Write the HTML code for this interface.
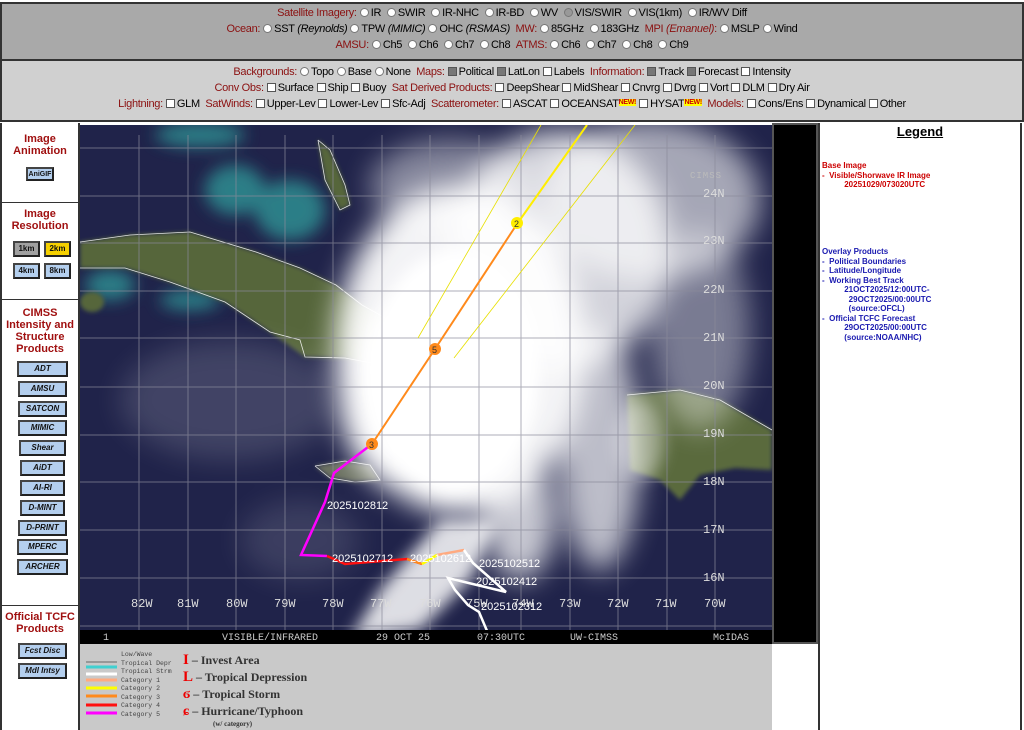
<!DOCTYPE html>
<html><head><meta charset="utf-8"><style>
*{margin:0;padding:0;box-sizing:border-box}
body{width:1024px;height:730px;overflow:hidden;background:#fff;font-family:"Liberation Sans",Arial,sans-serif;position:relative}
.p{position:absolute;left:0;width:1024px;text-align:center;font-size:11px;letter-spacing:-0.3px;color:#000}
.r{color:#8b1010}
.rb{display:inline-block;width:9px;height:9px;border-radius:50%;background:#fff;border:1px solid #777;vertical-align:-1px;margin:0 2px 0 3px}
.cb{display:inline-block;width:9px;height:9px;background:#fff;border:1px solid #555;vertical-align:-1px;margin:0 2px 0 3px}
.ck{background:#777}
.new{background:#ff0;color:#c00;font-size:7px;font-weight:bold;vertical-align:3px}
.sb{position:absolute;left:0;width:80px;text-align:center}
.h{color:#a01010;font-weight:bold;font-size:11px;line-height:12px}
.bt{position:absolute;background:#b4cfee;border:2px solid #444;border-right-color:#222;border-bottom-color:#222;font-size:8px;font-weight:bold;font-style:italic;text-align:center;line-height:11px;color:#111}
.lg{position:absolute;left:822px;font-size:8px;font-weight:bold;line-height:9.5px}
</style></head><body>
<div style="position:absolute;left:0;top:2px;width:1024px;height:59px;background:#a9a9a9;border:2px solid #333"></div>
<div style="position:absolute;left:0;top:61px;width:1024px;height:61px;background:#d0d0d0;border:2px solid #333;border-top:none"></div>
<div class="p" style="top:7px"><span class="r">Satellite Imagery:</span><span class="rb"></span>IR <span class="rb"></span>SWIR <span class="rb"></span>IR-NHC <span class="rb"></span>IR-BD <span class="rb"></span>WV <span class="rb" style="background:#999"></span>VIS/SWIR <span class="rb"></span>VIS(1km) <span class="rb"></span>IR/WV Diff</div>
<div class="p" style="top:23px"><span class="r">Ocean:</span><span class="rb"></span>SST <i>(Reynolds)</i><span class="rb"></span>TPW <i>(MIMIC)</i><span class="rb"></span>OHC <i>(RSMAS)</i> &nbsp;<span class="r">MW:</span><span class="rb"></span>85GHz <span class="rb"></span>183GHz &nbsp;<span class="r">MPI <i>(Emanuel)</i>:</span><span class="rb"></span>MSLP<span class="rb"></span>Wind</div>
<div class="p" style="top:39px"><span class="r">AMSU:</span><span class="rb"></span>Ch5 <span class="rb"></span>Ch6 <span class="rb"></span>Ch7 <span class="rb"></span>Ch8 &nbsp;<span class="r">ATMS:</span><span class="rb"></span>Ch6 <span class="rb"></span>Ch7 <span class="rb"></span>Ch8 <span class="rb"></span>Ch9</div>
<div class="p" style="top:66px"><span class="r">Backgrounds:</span><span class="rb"></span>Topo<span class="rb"></span>Base<span class="rb"></span>None &nbsp;<span class="r">Maps:</span><span class="cb ck"></span>Political<span class="cb ck"></span>LatLon<span class="cb"></span>Labels &nbsp;<span class="r">Information:</span><span class="cb ck"></span>Track<span class="cb ck"></span>Forecast<span class="cb"></span>Intensity</div>
<div class="p" style="top:82px"><span class="r">Conv Obs:</span><span class="cb"></span>Surface<span class="cb"></span>Ship<span class="cb"></span>Buoy &nbsp;<span class="r">Sat Derived Products:</span><span class="cb"></span>DeepShear<span class="cb"></span>MidShear<span class="cb"></span>Cnvrg<span class="cb"></span>Dvrg<span class="cb"></span>Vort<span class="cb"></span>DLM<span class="cb"></span>Dry Air</div>
<div class="p" style="top:98px"><span class="r">Lightning:</span><span class="cb"></span>GLM &nbsp;<span class="r">SatWinds:</span><span class="cb"></span>Upper-Lev<span class="cb"></span>Lower-Lev<span class="cb"></span>Sfc-Adj &nbsp;<span class="r">Scatterometer:</span><span class="cb"></span>ASCAT<span class="cb"></span>OCEANSAT<span class="new">NEW!</span><span class="cb"></span>HYSAT<span class="new">NEW!</span> &nbsp;<span class="r">Models:</span><span class="cb"></span>Cons/Ens<span class="cb"></span>Dynamical<span class="cb"></span>Other</div>

<div style="position:absolute;left:0;top:123px;width:80px;height:607px;border-right:2px solid #333;border-left:2px solid #333"></div>
<div style="position:absolute;left:2px;top:202px;width:78px;border-top:1px solid #333"></div>
<div style="position:absolute;left:2px;top:299px;width:78px;border-top:1px solid #333"></div>
<div style="position:absolute;left:2px;top:605px;width:78px;border-top:1px solid #333"></div>
<div class="sb h" style="top:133px">Image<br>Animation</div>
<div class="bt" style="left:26px;top:167px;width:28px;height:14px;font-style:normal;font-size:7px">AniGIF</div>
<div class="sb h" style="top:208px">Image<br>Resolution</div>
<div class="bt" style="left:13px;top:241px;width:27px;height:16px;background:#a0a0a0;font-style:normal">1km</div>
<div class="bt" style="left:44px;top:241px;width:27px;height:16px;background:#f5d000;font-style:normal">2km</div>
<div class="bt" style="left:13px;top:263px;width:27px;height:16px;font-style:normal">4km</div>
<div class="bt" style="left:44px;top:263px;width:27px;height:16px;font-style:normal">8km</div>
<div class="sb h" style="top:307px">CIMSS<br>Intensity and<br>Structure<br>Products</div>
<div class="bt" style="left:17px;top:361px;width:51px;height:16px">ADT</div>
<div class="bt" style="left:18px;top:381px;width:49px;height:16px">AMSU</div>
<div class="bt" style="left:18px;top:401px;width:49px;height:16px">SATCON</div>
<div class="bt" style="left:18px;top:420px;width:49px;height:16px">MIMIC</div>
<div class="bt" style="left:19px;top:440px;width:47px;height:16px">Shear</div>
<div class="bt" style="left:20px;top:460px;width:45px;height:16px">AiDT</div>
<div class="bt" style="left:20px;top:480px;width:45px;height:16px">AI-RI</div>
<div class="bt" style="left:20px;top:500px;width:45px;height:16px">D-MINT</div>
<div class="bt" style="left:18px;top:520px;width:49px;height:16px">D-PRINT</div>
<div class="bt" style="left:17px;top:539px;width:51px;height:16px">MPERC</div>
<div class="bt" style="left:17px;top:559px;width:51px;height:16px">ARCHER</div>
<div class="sb h" style="top:611px">Official TCFC<br>Products</div>
<div class="bt" style="left:18px;top:643px;width:49px;height:16px">Fcst Disc</div>
<div class="bt" style="left:18px;top:663px;width:49px;height:16px">Mdl Intsy</div>

<div style="position:absolute;left:772px;top:123px;width:46px;height:521px;background:#000;border:2px solid #555"></div>
<div style="position:absolute;left:818px;top:123px;width:204px;height:607px;border-left:2px solid #333;border-right:2px solid #333"></div>
<div style="position:absolute;left:818px;top:124px;width:204px;text-align:center;font-size:13px;font-weight:bold;text-decoration:underline">Legend</div>
<div class="lg" style="top:161px;color:#c00">Base Image<br>-&nbsp; Visible/Shorwave IR Image<br>&nbsp;&nbsp;&nbsp;&nbsp;&nbsp;&nbsp;&nbsp;&nbsp;&nbsp;&nbsp;20251029/073020UTC</div>
<div class="lg" style="top:247px;color:#1a1ab0">Overlay Products<br>-&nbsp; Political Boundaries<br>-&nbsp; Latitude/Longitude<br>-&nbsp; Working Best Track<br>&nbsp;&nbsp;&nbsp;&nbsp;&nbsp;&nbsp;&nbsp;&nbsp;&nbsp;&nbsp;21OCT2025/12:00UTC-<br>&nbsp;&nbsp;&nbsp;&nbsp;&nbsp;&nbsp;&nbsp;&nbsp;&nbsp;&nbsp;&nbsp;&nbsp;29OCT2025/00:00UTC<br>&nbsp;&nbsp;&nbsp;&nbsp;&nbsp;&nbsp;&nbsp;&nbsp;&nbsp;&nbsp;&nbsp;&nbsp;(source:OFCL)<br>-&nbsp; Official TCFC Forecast<br>&nbsp;&nbsp;&nbsp;&nbsp;&nbsp;&nbsp;&nbsp;&nbsp;&nbsp;&nbsp;29OCT2025/00:00UTC<br>&nbsp;&nbsp;&nbsp;&nbsp;&nbsp;&nbsp;&nbsp;&nbsp;&nbsp;&nbsp;(source:NOAA/NHC)</div>

<svg style="position:absolute;left:80px;top:125px" width="692" height="605" viewBox="80 125 692 605">
<defs>
<filter id="b8" x="-50%" y="-50%" width="200%" height="200%"><feGaussianBlur stdDeviation="8"/></filter>
<filter id="b14" x="-50%" y="-50%" width="200%" height="200%"><feGaussianBlur stdDeviation="14"/></filter>
<filter id="b4"><feGaussianBlur stdDeviation="2"/></filter>
</defs>
<rect x="80" y="125" width="692" height="520" fill="#20234a"/>
<g filter="url(#b8)" fill="#2f8e92" opacity="0.85">
<ellipse cx="235" cy="190" rx="30" ry="25"/>
<ellipse cx="290" cy="210" rx="35" ry="30"/>
<ellipse cx="200" cy="135" rx="45" ry="12"/>
<ellipse cx="110" cy="285" rx="25" ry="15"/>
<ellipse cx="190" cy="300" rx="30" ry="10"/>
</g>
<g filter="url(#b4)">
<polygon fill="#56663a" points="80,242 130,235 190,232 256,252 300,268 336,285 362,305 398,325 433,338 477,352 512,372 480,380 420,372 345,358 305,357 270,332 225,302 170,282 125,268 80,268"/>
<ellipse cx="92" cy="302" rx="12" ry="10" fill="#56663a"/>
<polygon fill="#56663a" points="318,140 330,150 345,185 350,205 340,210 325,180"/>
<polygon fill="#5a6a3c" points="627,395 680,390 720,400 772,430 772,470 735,468 700,475 680,500 660,480 630,470"/>
<polygon fill="#6a7060" points="315,466 345,461 370,465 380,480 355,482 330,478"/>
</g>
<g filter="url(#b14)" fill="#fff">
<ellipse cx="460" cy="350" rx="125" ry="165" opacity="0.95"/>
<ellipse cx="430" cy="400" rx="90" ry="100"/>
<ellipse cx="560" cy="250" rx="110" ry="120" opacity="0.8"/>
<ellipse cx="650" cy="200" rx="110" ry="80" opacity="0.6"/>
<ellipse cx="600" cy="450" rx="40" ry="120" opacity="0.7"/>
<ellipse cx="520" cy="520" rx="35" ry="60" opacity="0.75"/>
<ellipse cx="450" cy="185" rx="80" ry="45" opacity="0.45"/>
<ellipse cx="700" cy="330" rx="50" ry="100" opacity="0.4"/>
<ellipse cx="230" cy="400" rx="110" ry="60" opacity="0.15"/>
<ellipse cx="300" cy="540" rx="60" ry="40" opacity="0.12"/>
</g>
<g filter="url(#b8)" fill="#fff">
<polygon points="440,520 500,520 470,580 420,630 350,640 380,590" opacity="0.85"/>
<ellipse cx="455" cy="370" rx="85" ry="120"/>
<ellipse cx="640" cy="440" rx="25" ry="40" opacity="0.35"/>
</g>
<g fill="none" stroke="#fff" stroke-width="0.8" opacity="0.85">
<polyline points="80,242 130,235 190,232 256,252 300,268 336,285 362,305 398,325 433,338 477,352 512,372 480,380 420,372 345,358 305,357 300,340 270,332 225,302 170,282 125,268 80,268"/>
<polyline points="627,395 680,390 720,400 772,430 M660,480 630,470 627,395 600,392 560,398 550,410 600,420 595,460 640,470"/>
<polyline points="315,466 345,461 370,465 380,480 355,482 330,478 315,466"/>
<polyline points="318,140 330,150 345,185 350,205 340,210 325,180 318,140"/>
</g>
<g stroke="#8a8a9a" stroke-width="1" opacity="0.7">
<line x1="80" x2="772" y1="148" y2="148"/><line x1="80" x2="772" y1="196" y2="196"/><line x1="80" x2="772" y1="243" y2="243"/><line x1="80" x2="772" y1="291" y2="291"/><line x1="80" x2="772" y1="338" y2="338"/><line x1="80" x2="772" y1="387" y2="387"/><line x1="80" x2="772" y1="435" y2="435"/><line x1="80" x2="772" y1="482" y2="482"/><line x1="80" x2="772" y1="530" y2="530"/><line x1="80" x2="772" y1="578" y2="578"/><line x1="80" x2="772" y1="626" y2="626"/>
<line y1="135" y2="632" x1="139" x2="139"/><line y1="135" y2="632" x1="188" x2="188"/><line y1="135" y2="632" x1="236" x2="236"/><line y1="135" y2="632" x1="285" x2="285"/><line y1="135" y2="632" x1="333" x2="333"/><line y1="135" y2="632" x1="382" x2="382"/><line y1="135" y2="632" x1="430" x2="430"/><line y1="135" y2="632" x1="479" x2="479"/><line y1="135" y2="632" x1="521" x2="521"/><line y1="135" y2="632" x1="570" x2="570"/><line y1="135" y2="632" x1="618" x2="618"/><line y1="135" y2="632" x1="667" x2="667"/><line y1="135" y2="632" x1="715" x2="715"/>
</g>
<g font-family="Liberation Mono,monospace" font-size="12" fill="#ddd">
<text x="703" y="197">24N</text><text x="703" y="244">23N</text><text x="703" y="293">22N</text><text x="703" y="341">21N</text><text x="703" y="389">20N</text><text x="703" y="437">19N</text><text x="703" y="485">18N</text><text x="703" y="533">17N</text><text x="703" y="581">16N</text>
<text x="131" y="607">82W</text><text x="177" y="607">81W</text><text x="226" y="607">80W</text><text x="274" y="607">79W</text><text x="322" y="607">78W</text><text x="370" y="607">77W</text><text x="419" y="607">76W</text><text x="466" y="607">75W</text><text x="512" y="607">74W</text><text x="559" y="607">73W</text><text x="607" y="607">72W</text><text x="655" y="607">71W</text><text x="704" y="607">70W</text>
</g>
<text x="690" y="178" font-family="Liberation Mono,monospace" font-size="9" fill="#bbb" letter-spacing="1">CIMSS</text>
<g fill="none">
<line x1="418" y1="338" x2="541" y2="125" stroke="#e8e000" stroke-width="0.8"/>
<line x1="454" y1="358" x2="635" y2="125" stroke="#e8e000" stroke-width="0.8"/>
<polyline points="517,224 587,125" stroke="#ffee00" stroke-width="2"/>
<polyline points="517,224 435,349 372,444" stroke="#ff8a1c" stroke-width="2"/>
<polyline points="372,444 334,473 325,502 301,555 327,556" stroke="#ff00ff" stroke-width="2.5"/>
<polyline points="327,556 345,564 407,559 422,564" stroke="#ff1010" stroke-width="2.5"/>
<polyline points="407,559 422,564" stroke="#ff8a1c" stroke-width="2.5"/>
<polyline points="422,564 437,555" stroke="#ffff00" stroke-width="2.5"/>
<polyline points="437,555 464,550" stroke="#ffaa80" stroke-width="2.5"/>
<polyline points="464,550 473,563 506,592 448,578 455,590 468,605 479,612 493,645" stroke="#fff" stroke-width="2.5"/>
</g>
<circle cx="517" cy="223" r="6" fill="#ffee00"/><text x="514" y="227" font-size="9" font-family="Liberation Sans" fill="#333">2</text>
<circle cx="435" cy="349" r="6" fill="#ff8a1c"/><text x="432" y="353" font-size="9" font-family="Liberation Sans" fill="#333">5</text>
<circle cx="372" cy="444" r="6" fill="#ff8a1c"/><text x="369" y="448" font-size="9" font-family="Liberation Sans" fill="#333">3</text>
<g font-family="Liberation Sans" font-size="11" fill="#fff">
<text x="327" y="509">2025102812</text><text x="332" y="562">2025102712</text><text x="410" y="562">2025102612</text><text x="479" y="567">2025102512</text><text x="476" y="585">2025102412</text><text x="481" y="610">2025102312</text>
</g>
<rect x="80" y="630" width="692" height="14" fill="#000"/>
<g font-family="Liberation Mono,monospace" font-size="10" fill="#ccc"><text x="103" y="640">1</text><text x="222" y="640">VISIBLE/INFRARED</text><text x="376" y="640">29 OCT 25</text><text x="477" y="640">07:30UTC</text><text x="570" y="640">UW-CIMSS</text><text x="713" y="640">McIDAS</text></g>
<rect x="80" y="644" width="692" height="86" fill="#c9c9c9"/>
<g stroke-width="3">
<line x1="86" y1="662" x2="117" y2="662" stroke="#666" stroke-width="1"/>
<line x1="86" y1="667" x2="117" y2="667" stroke="#40d0d0"/>
<line x1="86" y1="674" x2="117" y2="674" stroke="#fff"/>
<line x1="86" y1="680" x2="117" y2="680" stroke="#ffaa80"/>
<line x1="86" y1="688" x2="117" y2="688" stroke="#ffff00"/>
<line x1="86" y1="696" x2="117" y2="696" stroke="#ff8a1c"/>
<line x1="86" y1="705" x2="117" y2="705" stroke="#ff1010"/>
<line x1="86" y1="713" x2="117" y2="713" stroke="#ff00ff"/>
</g>
<g font-family="Liberation Mono,monospace" font-size="6.5" fill="#444"><text x="121" y="656">Low/Wave</text><text x="121" y="665">Tropical Depr</text><text x="121" y="673">Tropical Strm</text><text x="121" y="682">Category 1</text><text x="121" y="690">Category 2</text><text x="121" y="699">Category 3</text><text x="121" y="707">Category 4</text><text x="121" y="716">Category 5</text></g>
<g font-family="Liberation Serif,serif" font-weight="bold" font-size="12" fill="#333"><text x="183" y="664"><tspan fill="#e00" font-size="15">I</tspan> – Invest Area</text><text x="183" y="681"><tspan fill="#e00" font-size="15">L</tspan> – Tropical Depression</text><text x="183" y="698"><tspan fill="#e00" font-size="14">ϭ</tspan> – Tropical Storm</text><text x="183" y="715"><tspan fill="#e00" font-size="14">ɕ</tspan> – Hurricane/Typhoon</text><text x="213" y="726" font-size="7">(w/ category)</text></g>
</svg>
</body></html>
